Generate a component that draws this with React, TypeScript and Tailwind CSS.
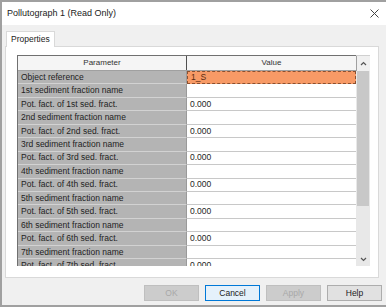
import React from 'react';

type Row = { label: string; value?: string; highlight?: boolean };

const ordinals = ['1st', '2nd', '3rd', '4th', '5th', '6th', '7th'];

const rows: Row[] = [
  { label: 'Object reference', value: '1_S', highlight: true },
  ...ordinals.flatMap((o) => [
    { label: `${o} sediment fraction name` },
    { label: `Pot. fact. of ${o} sed. fract.`, value: '0.000' },
  ]),
];

const DialogButton: React.FC<{ label: string; disabled?: boolean; focused?: boolean }> = ({ label, disabled, focused }) => (
  <button
    className={
      focused
        ? 'w-[55px] h-[16px] text-[8.5px] text-[#222] bg-[#e5f1fb] border border-[#0078d7] flex items-center justify-center'
        : disabled
        ? 'w-[55px] h-[16px] text-[8.5px] text-[#a8a8a8] bg-[#cccccc] border border-[#bfbfbf] flex items-center justify-center'
        : 'w-[55px] h-[16px] text-[8.5px] text-[#222] bg-[#e1e1e1] border border-[#adadad] flex items-center justify-center'
    }
  >
    {label}
  </button>
);

const App: React.FC = () => {
  return (
    <div
      className="w-[386px] h-[307px] bg-[#f0f0f0] border-l-2 border-t-2 border-b-2 border-[#a0a0a0] overflow-hidden flex flex-col"
      style={{ fontFamily: '"Liberation Sans", Arial, sans-serif' }}
    >
      {/* title bar */}
      <div className="h-[23px] bg-white flex items-center justify-between pl-[5px] pr-[7px] shrink-0">
        <span className="text-[9px] text-[#222]">Pollutograph 1 (Read Only)</span>
        <svg width="9" height="9" viewBox="0 0 9 9" className="text-[#444]">
          <path d="M0.5 0.5 L8.5 8.5 M8.5 0.5 L0.5 8.5" stroke="currentColor" strokeWidth="1" />
        </svg>
      </div>

      <div className="pl-[3px] pt-[5px] flex flex-col">
        {/* tabs */}
        <div className="flex">
          <div className="ml-[1px] h-[16px] px-[4px] bg-white border border-b-0 border-[#d9d9d9] text-[8.5px] text-[#222] flex items-center relative top-[1px]">
            Properties
          </div>
        </div>

        {/* panel */}
        <div className="w-[374px] h-[232px] bg-white border border-[#d9d9d9] pt-[8px] pl-[11px]">
          <div className="flex w-[353px] h-[211px]">
            <div className="w-[339px] flex flex-col border-l border-t border-[#707070] overflow-hidden">
              {/* header */}
              <div className="flex h-[15px] shrink-0 bg-[#f5f5f5] border-b border-[#a0a0a0]">
                <div className="w-[169px] flex items-center justify-center text-[8px] text-[#333] border-r border-[#505050]">
                  Parameter
                </div>
                <div className="flex-1 flex items-center justify-center text-[8px] text-[#333]">Value</div>
              </div>
              {rows.map((r, i) => (
                <div key={i} className="flex h-[13.45px] shrink-0">
                  <div className="w-[169px] bg-[#b4b4b4] border-b border-[#d2d2d2] border-r border-r-[#9a9a9a] flex items-center pl-[3px] text-[8.5px] text-[#1e1e1e] whitespace-nowrap">
                    {r.label}
                  </div>
                  <div
                    className={
                      r.highlight
                        ? 'flex-1 bg-[#f79a66] border border-dashed border-[#8a5030] flex items-center pl-[3px] text-[8.5px] text-[#5a2a10]'
                        : 'flex-1 bg-white border-b border-[#c8c8c8] flex items-center pl-[3px] text-[8.5px] text-[#1e1e1e]'
                    }
                  >
                    {r.value ?? ''}
                  </div>
                </div>
              ))}
            </div>

            {/* scrollbar */}
            <div className="w-[14px] flex flex-col bg-[#e8e8e8] border-t border-[#d0d0d0]">
              <div className="h-[15px] flex items-center justify-center bg-[#f0f0f0] border-l border-[#a0a0a0]">
                <svg width="7" height="5" viewBox="0 0 7 5">
                  <path d="M1 4 L3.5 1.5 L6 4" stroke="#555" strokeWidth="1.2" fill="none" />
                </svg>
              </div>
              <div className="h-[135px] bg-[#c8c8c8] mx-[1px]" />
              <div className="flex-1" />
              <div className="h-[14px] flex items-center justify-center">
                <svg width="7" height="5" viewBox="0 0 7 5">
                  <path d="M1 1 L3.5 3.5 L6 1" stroke="#555" strokeWidth="1.2" fill="none" />
                </svg>
              </div>
            </div>
          </div>
        </div>

        {/* buttons */}
        <div className="flex justify-end gap-[6px] pr-[4px] mt-[7px]">
          <DialogButton label="OK" disabled />
          <DialogButton label="Cancel" focused />
          <DialogButton label="Apply" disabled />
          <DialogButton label="Help" />
        </div>
      </div>
    </div>
  );
};

export default App;
